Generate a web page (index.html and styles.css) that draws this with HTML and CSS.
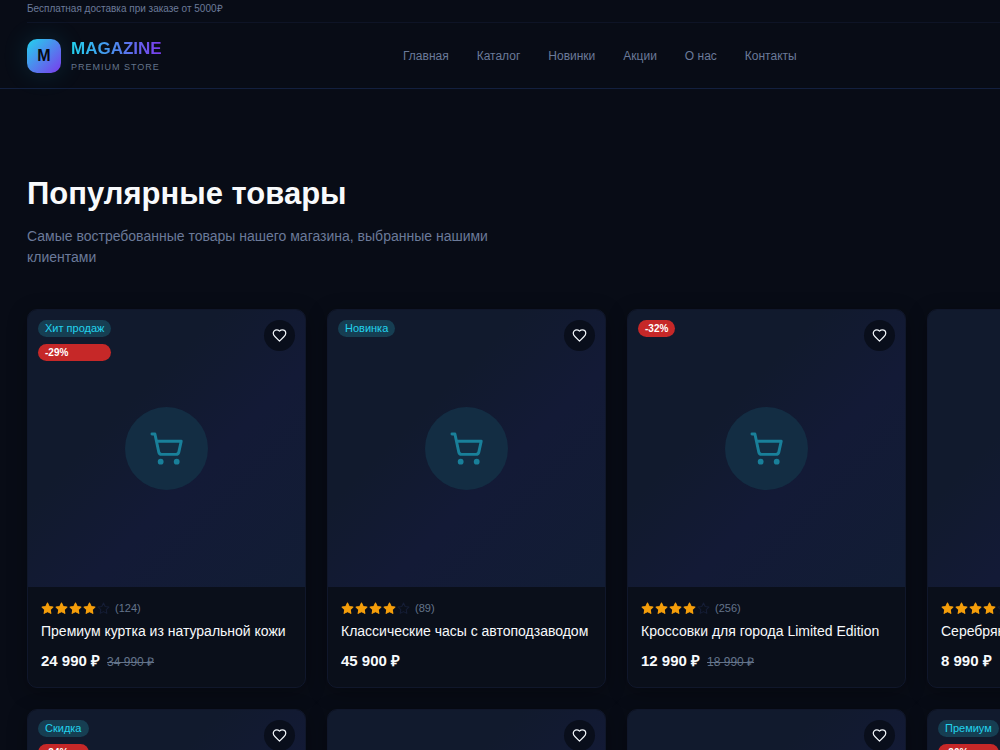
FILE: index.html
```html
<!DOCTYPE html>
<html lang="ru">
<head>
<meta charset="utf-8">
<meta name="viewport" content="width=device-width, initial-scale=1">
<title>Magazine</title>
<link rel="stylesheet" href="styles.css">
</head>
<body>
<svg class="sprite" aria-hidden="true">
  <symbol id="cart" viewBox="0 0 24 24"><path d="M2.05 2.05h2l2.66 12.42a2 2 0 0 0 2 1.58h9.78a2 2 0 0 0 1.95-1.57l1.65-7.43H5.12" fill="none" stroke="currentColor" stroke-width="2" stroke-linecap="round" stroke-linejoin="round"/><circle cx="8" cy="21" r="2"/><circle cx="19" cy="21" r="2"/></symbol>
  <symbol id="heart" viewBox="0 0 24 24"><path d="M19 14c1.49-1.46 3-3.21 3-5.5A5.5 5.5 0 0 0 16.5 3c-1.76 0-3 .5-4.5 2-1.5-1.5-2.74-2-4.5-2A5.5 5.5 0 0 0 2 8.5c0 2.3 1.5 4.05 3 5.5l7 7Z" fill="none" stroke="currentColor" stroke-width="2" stroke-linecap="round" stroke-linejoin="round"/></symbol>
  <symbol id="star" viewBox="0 0 24 24"><path d="M12 2l3.09 6.26L22 9.27l-5 4.87 1.18 6.88L12 17.77l-6.18 3.25L7 14.14 2 9.27l6.91-1.01z" stroke="currentColor" stroke-width="2" stroke-linejoin="round"/></symbol>
</svg>
<header class="header">
  <div class="topbar">Бесплатная доставка при заказе от 5000₽</div>
  <div class="header-main">
    <a class="brand" href="#">
      <span class="brand-mark">M</span>
      <span class="brand-text"><span class="brand-name">MAGAZINE</span><span class="brand-sub">PREMIUM STORE</span></span>
    </a>
    <nav class="nav">
      <a href="#">Главная</a><a href="#">Каталог</a><a href="#">Новинки</a><a href="#">Акции</a><a href="#">О нас</a><a href="#">Контакты</a>
    </nav>
  </div>
</header>
<main class="section">
  <h1 class="title">Популярные товары</h1>
  <p class="lead">Самые востребованные товары нашего магазина, выбранные нашими клиентами</p>
  <div class="grid" id="grid"></div>
</main>
<script src="app.js"></script>
</body>
</html>
```

FILE: app.js
```js
const products = [
  { name: "Премиум куртка из натуральной кожи", reviews: 124, price: "24 990 ₽", old: "34 990 ₽", tag: "Хит продаж", off: "-29%" },
  { name: "Классические часы с автоподзаводом", reviews: 89, price: "45 900 ₽", tag: "Новинка" },
  { name: "Кроссовки для города Limited Edition", reviews: 256, price: "12 990 ₽", old: "18 990 ₽", off: "-32%" },
  { name: "Серебряный браслет", reviews: 67, price: "8 990 ₽" },
  { name: "Кожаная сумка", reviews: 143, price: "18 990 ₽", tag: "Скидка", off: "-24%" },
  { name: "Солнцезащитные очки", reviews: 98, price: "7 990 ₽" },
  { name: "Шерстяной шарф", reviews: 54, price: "4 990 ₽" },
  { name: "Кашемировое пальто", reviews: 76, price: "39 990 ₽", tag: "Премиум", off: "-20%" }
];

const icon = (id, cls) => `<svg class="${cls}" aria-hidden="true"><use href="#${id}"/></svg>`;

document.getElementById("grid").innerHTML = products.map(p => `
  <article class="card">
    <div class="media">
      <div class="badges">
        ${p.tag ? `<span class="badge badge-tag">${p.tag}</span>` : ""}
        ${p.off ? `<span class="badge badge-off">${p.off}</span>` : ""}
      </div>
      <button class="like" type="button" aria-label="В избранное">${icon("heart", "like-icon")}</button>
      <div class="placeholder">${icon("cart", "cart-icon")}</div>
    </div>
    <div class="info">
      <div class="rating">
        <span class="stars">${icon("star", "star").repeat(4)}${icon("star", "star star-empty")}</span>
        <span class="reviews">(${p.reviews})</span>
      </div>
      <h2 class="name">${p.name}</h2>
      <div class="prices"><span class="price">${p.price}</span>${p.old ? `<s class="old">${p.old}</s>` : ""}</div>
    </div>
  </article>`).join("");
```

FILE: styles.css
```css
* { box-sizing: border-box; }
html { overflow-x: hidden; background: #080c16; }
body {
  margin: 0;
  font-family: "Liberation Sans", Arial, sans-serif;
  color: #f8fafc;
}
a { color: inherit; text-decoration: none; }
.sprite { display: none; }

.header { border-bottom: 1px solid #13203f; }
.topbar {
  margin: 0 0 0 27px;
  height: 23px;
  border-bottom: 1px solid #0e1426;
  font-size: 10px;
  line-height: 17px;
  color: #6b7a99;
}
.header-main {
  display: flex;
  align-items: center;
  padding: 16px 27px 15px;
}
.brand { display: flex; align-items: center; gap: 10px; flex: 0 0 376px; }
.brand-mark {
  display: grid;
  place-items: center;
  width: 34px;
  height: 34px;
  border-radius: 10px;
  background: linear-gradient(135deg, #22d3ee, #7c3aed);
  box-shadow: 0 0 26px rgba(34, 211, 238, 0.15);
  color: #070a13;
  font-size: 16px;
  line-height: 18px;
  font-weight: 700;
}
.brand-text { display: flex; flex-direction: column; align-items: flex-start; gap: 2px; }
.brand-name {
  font-size: 17px;
  line-height: 20px;
  font-weight: 700;
  background: linear-gradient(90deg, #22d3ee, #7c3aed);
  -webkit-background-clip: text;
  background-clip: text;
  color: transparent;
}
.brand-sub { font-size: 9px; line-height: 12px; letter-spacing: 1px; color: #64748b; }
.nav { display: flex; gap: 28px; font-size: 12px; color: #6b7a99; white-space: nowrap; }

.section { padding: 84px 27px; }
.title { margin: 0; font-size: 31px; line-height: 42px; font-weight: 700; }
.lead { margin: 11px 0 0; max-width: 490px; font-size: 14px; line-height: 21px; color: #6b7a99; }
.grid {
  display: grid;
  grid-template-columns: repeat(4, minmax(279px, 1fr));
  gap: 21px;
  margin-top: 41px;
}

.card {
  overflow: hidden;
  border: 1px solid #10172b;
  border-radius: 10px;
  background: #0a0f1a;
  box-shadow: 0 4px 20px rgba(0, 0, 0, 0.3);
}
.media {
  position: relative;
  display: grid;
  place-items: center;
  aspect-ratio: 1;
  background: linear-gradient(135deg, #111a2d 0%, #111a2d 35%, #131a36 60%, #121d35 100%);
}
.badges { position: absolute; top: 10px; left: 10px; display: flex; flex-direction: column; gap: 7px; }
.badge { padding: 0 7px; border-radius: 9px; font-size: 11px; line-height: 17px; }
.badge-tag { background: #163e52; color: #22d3ee; }
.badge-off { background: #c62828; color: #fff; font-size: 10px; font-weight: 700; }
.like {
  position: absolute;
  top: 10px;
  right: 10px;
  display: grid;
  place-items: center;
  width: 31px;
  height: 31px;
  padding: 0;
  border: 0;
  border-radius: 50%;
  background: #090e1b;
  color: #f1f5f9;
}
.like-icon { width: 15px; height: 15px; }
.placeholder {
  display: grid;
  place-items: center;
  width: 83px;
  height: 83px;
  border-radius: 50%;
  background: #132d43;
}
.cart-icon { width: 35px; height: 35px; color: #19809a; fill: currentColor; }

.info { padding: 14px 13px 15px; }
.rating { display: flex; align-items: center; gap: 5px; height: 14px; }
.stars { display: flex; gap: 1px; }
.star { width: 13px; height: 13px; color: #f59e0b; fill: currentColor; }
.star-empty { color: #151d35; fill: none; }
.reviews { font-size: 11px; color: #64748b; }
.name { margin: 7px 0 0; font-size: 14px; line-height: 19px; font-weight: 400; white-space: nowrap; }
.prices { display: flex; align-items: baseline; gap: 7px; margin-top: 10px; line-height: 20px; }
.price { font-size: 15px; font-weight: 700; }
.old { font-size: 12px; color: #64748b; }
```
